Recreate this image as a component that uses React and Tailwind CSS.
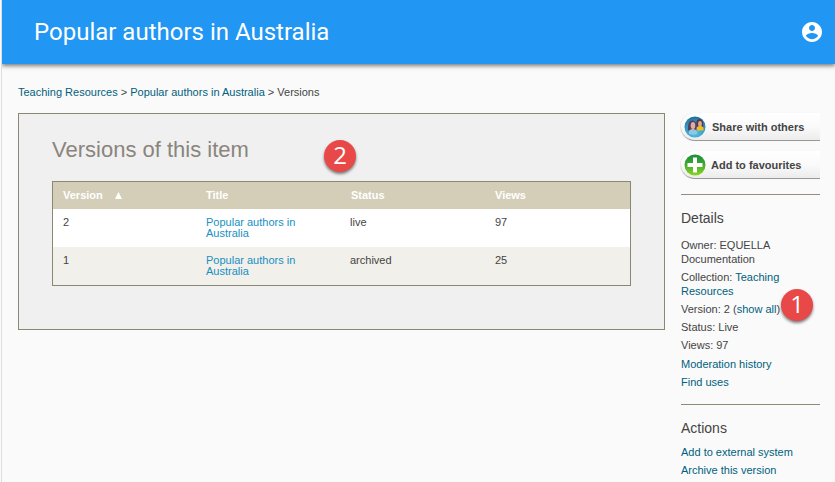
import React from "react";

const cell = "pt-[8px] leading-[11px]";

function Marker({ n, className }) {
  return (
    <span
      className={`absolute flex h-8 w-8 items-center justify-center rounded-full bg-[#e94848] pb-[3px] font-['Open_Sans',sans-serif] text-[24px] leading-none text-white shadow-[0_2px_3px_rgba(0,0,0,0.5)] ${className}`}
    >
      {n}
    </span>
  );
}

function SideButton({ icon, children, gap }) {
  return (
    <button
      className={`flex h-7 w-full items-center rounded-l-[14px] border-b border-[#999] bg-linear-to-b from-white via-[#fafafa] to-[#ececec] pl-[3px] text-left text-[11px] font-bold text-[#444] shadow-[-1px_0_1px_rgba(0,0,0,0.08)] ${gap}`}
    >
      {icon}
      <span className="pt-[2px]">{children}</span>
    </button>
  );
}

function PeopleIcon() {
  return (
    <svg width="22" height="22" viewBox="0 0 22 22" className="shrink-0">
      <defs>
        <radialGradient id="people" cx="50%" cy="75%" r="70%">
          <stop offset="0" stopColor="#58c4e4" />
          <stop offset="0.6" stopColor="#3a9fca" />
          <stop offset="1" stopColor="#23719f" />
        </radialGradient>
        <clipPath id="disc">
          <circle cx="11" cy="11" r="10" />
        </clipPath>
      </defs>
      <circle cx="11" cy="11" r="10.5" fill="url(#people)" />
      <g clipPath="url(#disc)">
        <path d="M12.500 11.500c-1-5 0-8.500 3-8.500s4 3 3.700 8z" fill="#54394c" />
        <ellipse cx="16" cy="7.800" rx="1.900" ry="2.900" fill="#e0a68c" />
        <path d="M12.500 14.500c-.8-3.500 1.500-4.500 3.800-4.500s3.700 1.500 3.200 4.500z" fill="#f2bf1f" />
        <path d="M3.800 14.500C4 8 4.500 4.500 8.500 4.500s4.200 4 4 10z" fill="#553d58" />
        <ellipse cx="9" cy="9.500" rx="2.300" ry="3.600" fill="#deaea5" />
        <path d="M5 18c-.6-3.500 1-4.700 3.800-4.700s4.700 1.200 4.200 4.700c-2.500 1-5.500 1-8 0z" fill="#8cc9e8" />
        <path d="M7.500 12.800h2.800l-1.300 2.400z" fill="#deaea5" />
      </g>
    </svg>
  );
}

function PlusIcon() {
  return (
    <svg width="22" height="22" viewBox="0 0 22 22" className="shrink-0">
      <defs>
        <linearGradient id="plus" x1="0" y1="0" x2="0" y2="1">
          <stop offset="0" stopColor="#178c3a" />
          <stop offset="0.45" stopColor="#3fa832" />
          <stop offset="1" stopColor="#8fd322" />
        </linearGradient>
      </defs>
      <circle cx="11" cy="11" r="10.500" fill="url(#plus)" />
      <path d="M9 3.500h4v5.500h5.500v4H13v5.500H9V13H3.500V9H9z" fill="#fff" />
    </svg>
  );
}

const rows = [
  { version: "2", status: "live", views: "97", bg: "bg-white" },
  { version: "1", status: "archived", views: "25", bg: "bg-[#f2f0ea]" },
];

const link = "text-[#005f7d]";

export default function App() {
  return (
    <div className="flex h-[482px] w-[835px] flex-col overflow-hidden border-l border-[#fafafa] bg-[#fafafa] font-['Liberation_Sans',Arial,sans-serif] text-[11px] text-[#444]">
      <div className="flex min-h-0 flex-1 flex-col overflow-hidden border-l border-[#dedede]">
        <header className="flex h-16 shrink-0 items-center justify-between bg-[#2196f3] pr-[11px] pl-8 text-white shadow-[0_2px_4px_rgba(0,0,0,0.5)]">
          <h1 className="font-[Roboto,sans-serif] text-[24px] leading-8 font-normal">
            Popular authors in Australia
          </h1>
          <svg width="24" height="24" viewBox="0 0 24 24" fill="currentColor">
            <path d="M12 2C6.480 2 2 6.480 2 12s4.480 10 10 10 10-4.480 10-10S17.520 2 12 2zm0 3c1.660 0 3 1.340 3 3s-1.340 3-3 3-3-1.340-3-3 1.340-3 3-3zm0 14.200c-2.500 0-4.710-1.280-6-3.220.030-1.990 4-3.080 6-3.080 1.990 0 5.970 1.090 6 3.080-1.290 1.940-3.500 3.220-6 3.220z" />
          </svg>
        </header>

        <nav className="mt-[21px] pl-4 leading-[14px]">
          <a className={link}>Teaching Resources</a> &gt;{" "}
          <a className={link}>Popular authors in Australia</a> &gt; Versions
        </nav>

        <div className="mt-[14px] flex items-start gap-4 pl-4">
          <main className="relative h-[217px] w-[647px] border border-[#8a8773] bg-[#f0f0f0] px-[33px] pt-[22px]">
            <h2 className="h-[45px] text-[22px] leading-7 text-[#8a857d]">Versions of this item</h2>
            <Marker n="2" className="top-[26px] left-[305px]" />
            <div className="border border-[#8a8773]">
              <div className="grid h-[27px] grid-cols-[143px_145px_144px_1fr] items-center bg-[#d4ceb8] pl-[10px] font-bold text-white">
                <div className="flex items-center gap-3">
                  Version
                  <svg width="7" height="7" viewBox="0 0 7 7" fill="currentColor">
                    <path d="M3.500 0L7 7H0z" />
                  </svg>
                </div>
                <div>Title</div>
                <div>Status</div>
                <div>Views</div>
              </div>
              {rows.map((r) => (
                <div
                  key={r.version}
                  className={`grid h-[38px] grid-cols-[143px_144px_145px_1fr] pl-[10px] ${r.bg}`}
                >
                  <div className={cell}>{r.version}</div>
                  <div className={`${cell} pr-10`}>
                    <a className="text-[#178fc2]">Popular authors in Australia</a>
                  </div>
                  <div className={cell}>{r.status}</div>
                  <div className={cell}>{r.views}</div>
                </div>
              ))}
            </div>
          </main>

          <aside className="relative w-[139px]">
            <div className="flex flex-col gap-[10px]">
              <SideButton icon={<PeopleIcon />} gap="gap-[6px]">Share with others</SideButton>
              <SideButton icon={<PlusIcon />} gap="gap-[5px]">Add to favourites</SideButton>
            </div>
            <section className="mt-[15px] border-t border-[#968d7f] pt-[14px]">
              <h3 className="text-[14px] leading-[18px]">Details</h3>
              <div className="mt-[11px] flex flex-col gap-1 leading-[14px]">
                <p>Owner: EQUELLA Documentation</p>
                <p>
                  Collection: <a className={link}>Teaching Resources</a>
                </p>
                <p>
                  Version: 2 (<a className={link}>show all</a>)
                </p>
                <p>Status: Live</p>
                <p>Views: 97</p>
                <a className={`mt-px ${link}`}>Moderation history</a>
                <a className={link}>Find uses</a>
              </div>
            </section>
            <section className="mt-[15px] border-t border-[#8f8a73] pt-[14px]">
              <h3 className="text-[14px] leading-[18px]">Actions</h3>
              <div className="mt-2 flex flex-col gap-1 leading-[14px]">
                <a className={link}>Add to external system</a>
                <a className={link}>Archive this version</a>
              </div>
            </section>
            <Marker n="1" className="top-[176px] left-[100px]" />
          </aside>
        </div>
      </div>
    </div>
  );
}
